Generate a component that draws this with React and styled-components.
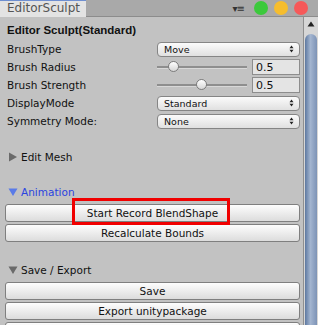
import React from "react";
import styled, { createGlobalStyle } from "styled-components";

const GlobalStyle = createGlobalStyle`
  html, body {
    margin: 0;
    padding: 0;
    background: #c2c2c2;
  }
  body {
    font-family: "DejaVu Sans", "Liberation Sans", sans-serif;
    font-size: 10.5px;
    color: #111;
  }
`;

const Window = styled.div`
  width: 318px;
  height: 325px;
  overflow: hidden;
  display: flex;
  flex-direction: column;
  background: #c2c2c2;
`;

const TitleBar = styled.div`
  height: 16px;
  flex: none;
  display: flex;
  align-items: stretch;
  background: #a9a9a9;
  border-bottom: 1px solid #8c8c8c;
`;

const Tab = styled.div`
  width: 86px;
  box-sizing: border-box;
  padding-left: 7px;
  background: #e3e3e3;
  border-top: 1px solid #6f8fd0;
  color: #555;
  font-size: 12px;
  line-height: 15px;
  margin-bottom: -1px;
`;

const TitleTools = styled.div`
  margin-left: auto;
  display: flex;
  align-items: center;
  gap: 6px;
  padding-right: 10px;
`;

const MenuGlyph = styled.span`
  color: #333;
  font-size: 10px;
  letter-spacing: -1px;
  margin-right: 4px;
`;

const Light = styled.span`
  width: 14px;
  height: 14px;
  border-radius: 50%;
  background: ${(p) => p.$color};
`;

const Body = styled.div`
  flex: 1;
  display: flex;
  min-height: 0;
`;

const Content = styled.div`
  position: relative;
  flex: 1;
  padding: 5px 3px 0 5px;
`;

const Header = styled.div`
  height: 16px;
  line-height: 17px;
  padding-left: 2px;
  font-family: "Liberation Sans", "DejaVu Sans", sans-serif;
  font-weight: bold;
  font-size: 11.5px;
  margin-bottom: 2px;
`;

const Row = styled.div`
  height: 18px;
  display: flex;
  align-items: center;
`;

const Label = styled.div`
  width: 150px;
  padding-left: 2px;
`;

const Popup = styled.div`
  flex: 1;
  height: 15px;
  box-sizing: border-box;
  border: 1px solid #858585;
  border-radius: 4px;
  background: linear-gradient(#fbfbfb, #e0e0e0);
  display: flex;
  align-items: center;
  padding: 0 5px 0 6px;
  font-size: 9.5px;
  justify-content: space-between;
`;

const SliderWrap = styled.div`
  width: 90px;
  height: 16px;
  position: relative;
  display: flex;
  align-items: center;
  margin-right: 5px;
`;

const Track = styled.div`
  width: 100%;
  height: 2px;
  background: #8e8e8e;
  border-bottom: 1px solid #d8d8d8;
`;

const Thumb = styled.div`
  position: absolute;
  top: 2px;
  width: 11px;
  height: 11px;
  margin-left: -6px;
  box-sizing: border-box;
  border-radius: 50%;
  border: 1px solid #7c7c7c;
  background: linear-gradient(#ffffff, #d6d6d6);
`;

const NumberField = styled.div`
  flex: 1;
  height: 16px;
  box-sizing: border-box;
  border: 1px solid #8d8d8d;
  background: #e4e4e4;
  padding-left: 3px;
  font-size: 11px;
  line-height: 15px;
`;

const Foldout = styled.div`
  height: 16px;
  display: flex;
  align-items: center;
  gap: 3px;
  padding-left: 3px;
  margin-top: ${(p) => p.$gap}px;
  color: ${(p) => (p.$open && p.$active ? "#2a44e0" : "#111")};
`;

const Button = styled.div`
  height: 18px;
  box-sizing: border-box;
  border: 1px solid #7f7f7f;
  border-radius: 3px;
  background: linear-gradient(#fdfdfd, #dcdcdc);
  display: flex;
  align-items: center;
  justify-content: center;
  margin-top: ${(p) => p.$gap}px;
  font-size: 10.5px;
`;

const Highlight = styled.div`
  position: absolute;
  left: 72px;
  top: 181px;
  width: 158px;
  height: 27px;
  box-sizing: border-box;
  border: 3px solid #f00000;
`;

const Scrollbar = styled.div`
  width: 14px;
  flex: none;
  background: #d6d6d6;
  border-left: 1px solid #8f8f8f;
  display: flex;
  flex-direction: column;
  align-items: center;
`;

const Arrow = styled.div`
  height: 14px;
  display: flex;
  align-items: center;
`;

const ScrollThumb = styled.div`
  margin-top: 3px;
  flex: 1;
  width: 12px;
  border-radius: 6px 6px 0 0;
  background: linear-gradient(to right, #5d78a0, #a3b5d0 45%, #7d93b6);
`;

const UpDown = () => (
  <svg width="5" height="8" viewBox="0 0 5 8">
    <path d="M0.5 3.2 L2.5 0.5 L4.5 3.2 Z M0.5 4.8 L2.5 7.5 L4.5 4.8 Z" fill="#222" />
  </svg>
);

const Tri = ({ open, color }) => (
  <svg width="10" height="10" viewBox="0 0 10 10">
    {open ? (
      <path d="M0.5 1.5 L9.5 1.5 L5 9 Z" fill={color} />
    ) : (
      <path d="M1 0.5 L9 5 L1 9.5 Z" fill={color} />
    )}
  </svg>
);

const Slider = ({ pos }) => (
  <SliderWrap>
    <Track />
    <Thumb style={{ left: `${pos}%` }} />
  </SliderWrap>
);

export default function App() {
  return (
    <Window>
      <GlobalStyle />
      <TitleBar>
        <Tab>EditorSculpt</Tab>
        <TitleTools>
          <MenuGlyph>▾≡</MenuGlyph>
          <Light $color="#3cc93c" />
          <Light $color="#f6bd2e" />
          <Light $color="#f65959" />
        </TitleTools>
      </TitleBar>
      <Body>
        <Content>
          <Header>Editor Sculpt(Standard)</Header>
          <Row>
            <Label>BrushType</Label>
            <Popup>
              Move <UpDown />
            </Popup>
          </Row>
          <Row>
            <Label>Brush Radius</Label>
            <Slider pos={19} />
            <NumberField>0.5</NumberField>
          </Row>
          <Row>
            <Label>Brush Strength</Label>
            <Slider pos={50} />
            <NumberField>0.5</NumberField>
          </Row>
          <Row>
            <Label>DisplayMode</Label>
            <Popup>
              Standard <UpDown />
            </Popup>
          </Row>
          <Row>
            <Label>Symmetry Mode:</Label>
            <Popup>
              None <UpDown />
            </Popup>
          </Row>

          <Foldout $gap={19}>
            <Tri color="#6a6a6a" />
            Edit Mesh
          </Foldout>
          <Foldout $gap={19} $open $active>
            <Tri open color="#5a7be8" />
            Animation
          </Foldout>
          <Button $gap={4}>Start Record BlendShape</Button>
          <Button $gap={2}>Recalculate Bounds</Button>
          <Foldout $gap={20} $open>
            <Tri open color="#6a6a6a" />
            Save / Export
          </Foldout>
          <Button $gap={4}>Save</Button>
          <Button $gap={2}>Export unitypackage</Button>
          <Button $gap={2} />

          <Highlight />
        </Content>
        <Scrollbar>
          <Arrow>
            <svg width="8" height="6" viewBox="0 0 8 6">
              <path d="M0.5 5.5 L4 0.5 L7.5 5.5 Z" fill="#222" />
            </svg>
          </Arrow>
          <ScrollThumb />
        </Scrollbar>
      </Body>
    </Window>
  );
}
